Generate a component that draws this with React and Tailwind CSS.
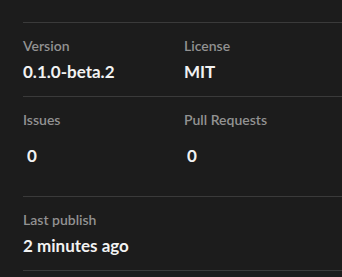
import React from "react";

const Label = ({ children }) => (
  <h3 className="text-[14px] leading-[20px] text-[#929292] font-semibold">{children}</h3>
);

const Value = ({ children }) => (
  <p className="mt-[4px] text-[17px] leading-[24px] font-bold text-[#f2f2f2]">{children}</p>
);

export default function App() {
  return (
    <div
      className="w-[342px] h-[277px] bg-[#1c1c1c] pl-[23px] pt-[22px] overflow-hidden"
      style={{ fontFamily: "Lato, 'Noto Sans', sans-serif" }}
    >
      <div className="border-t border-[#3a3a3a] grid grid-cols-[161px_1fr] h-[74px] pt-[13px]">
        <div>
          <Label>Version</Label>
          <Value>0.1.0-beta.2</Value>
        </div>
        <div>
          <Label>License</Label>
          <Value>MIT</Value>
        </div>
      </div>

      <div className="border-t border-[#3a3a3a] grid grid-cols-[161px_1fr] h-[100px] pt-[13px]">
        <div>
          <Label>Issues</Label>
          <p className="mt-[14px] px-[4px] text-[17px] leading-[24px] font-bold text-[#f2f2f2]">0</p>
        </div>
        <div>
          <Label>Pull Requests</Label>
          <p className="mt-[14px] px-[3px] text-[17px] leading-[24px] font-bold text-[#f2f2f2]">0</p>
        </div>
      </div>

      <div className="border-t border-[#3a3a3a] h-[74px] pt-[13px]">
        <Label>Last publish</Label>
        <Value>2 minutes ago</Value>
      </div>

      <div className="border-t border-[#3a3a3a]" />
    </div>
  );
}
